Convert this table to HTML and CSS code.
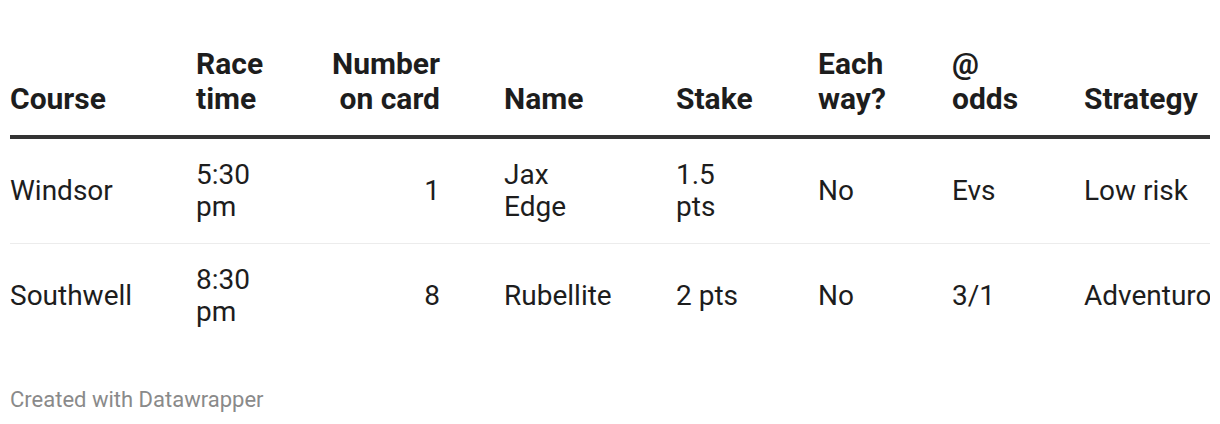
FILE: index.html
```html
<!DOCTYPE html>
<html>
<head>
<meta charset="utf-8">
<link rel="stylesheet" href="styles.css">
</head>
<body>
<div class="chart">
  <div class="table-wrap">
    <table class="tbl">
      <colgroup>
        <col class="c-course"><col class="c-time"><col class="c-num"><col class="c-name"><col class="c-stake"><col class="c-each"><col class="c-odds"><col class="c-strat">
      </colgroup>
      <thead>
        <tr>
          <th>Course</th>
          <th>Race<br>time</th>
          <th class="num">Number<br>on card</th>
          <th class="pad-left">Name</th>
          <th>Stake</th>
          <th>Each<br>way?</th>
          <th>@<br>odds</th>
          <th>Strategy</th>
        </tr>
      </thead>
      <tbody>
        <tr>
          <td>Windsor</td>
          <td>5:30<br>pm</td>
          <td class="num">1</td>
          <td class="pad-left">Jax<br>Edge</td>
          <td>1.5<br>pts</td>
          <td>No</td>
          <td>Evs</td>
          <td class="nowrap">Low risk</td>
        </tr>
        <tr>
          <td>Southwell</td>
          <td>8:30<br>pm</td>
          <td class="num">8</td>
          <td class="pad-left">Rubellite</td>
          <td>2 pts</td>
          <td>No</td>
          <td>3/1</td>
          <td class="nowrap">Adventurous</td>
        </tr>
      </tbody>
    </table>
  </div>
  <div class="footer">Created with Datawrapper</div>
</div>
</body>
</html>
```
FILE: styles.css
```css
html, body {
  margin: 0;
  padding: 0;
  background: #ffffff;
}
body {
  font-family: Roboto, "Liberation Sans", sans-serif;
  color: #1d1d1d;
}
.chart {
  padding: 46px 10px 0 10px;
}
.table-wrap {
  width: 1200px;
  overflow: hidden;
}
.tbl {
  border-collapse: collapse;
  table-layout: fixed;
  width: 1300px;
}
.c-course { width: 186px; }
.c-time { width: 110px; }
.c-num { width: 134px; }
.c-name { width: 236px; }
.c-stake { width: 142px; }
.c-each { width: 134px; }
.c-odds { width: 132px; }
.c-strat { width: 226px; }
.tbl th {
  font-weight: 700;
  font-size: 30px;
  line-height: 35px;
  text-align: left;
  vertical-align: bottom;
  padding: 0 0 19px 0;
  border-bottom: 4px solid #333333;
  color: #1d1d1d;
}
.tbl td {
  font-size: 28px;
  line-height: 32px;
  text-align: left;
  vertical-align: middle;
  padding: 20px 0;
  border-bottom: 1px solid #ececec;
}
.tbl tbody tr:last-child td {
  border-bottom: none;
}
.tbl .num {
  text-align: right;
  padding-right: 0;
}
.tbl .pad-left {
  padding-left: 64px;
}
.nowrap {
  white-space: nowrap;
}
.footer {
  margin-top: 39px;
  font-size: 22px;
  color: #8a8a8a;
}
```
